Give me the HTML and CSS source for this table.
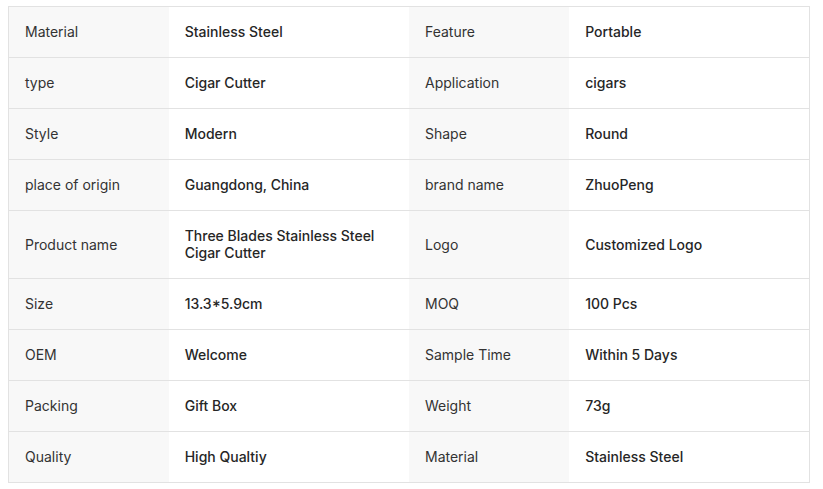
FILE: index.html
```html
<!DOCTYPE html>
<html lang="en">
<head>
<meta charset="utf-8">
<title>Specifications</title>
<link rel="stylesheet" href="styles.css">
</head>
<body>
<table class="spec">
  <colgroup>
    <col class="c-label"><col class="c-value"><col class="c-label"><col class="c-value">
  </colgroup>
  <tbody>
    <tr><td class="label">Material</td><td class="value">Stainless Steel</td><td class="label">Feature</td><td class="value">Portable</td></tr>
    <tr><td class="label">type</td><td class="value">Cigar Cutter</td><td class="label">Application</td><td class="value">cigars</td></tr>
    <tr><td class="label">Style</td><td class="value">Modern</td><td class="label">Shape</td><td class="value">Round</td></tr>
    <tr><td class="label">place of origin</td><td class="value">Guangdong, China</td><td class="label">brand name</td><td class="value">ZhuoPeng</td></tr>
    <tr><td class="label">Product name</td><td class="value">Three Blades Stainless Steel Cigar Cutter</td><td class="label">Logo</td><td class="value">Customized Logo</td></tr>
    <tr><td class="label">Size</td><td class="value">13.3*5.9cm</td><td class="label">MOQ</td><td class="value">100 Pcs</td></tr>
    <tr><td class="label">OEM</td><td class="value">Welcome</td><td class="label">Sample Time</td><td class="value">Within 5 Days</td></tr>
    <tr><td class="label">Packing</td><td class="value">Gift Box</td><td class="label">Weight</td><td class="value">73g</td></tr>
    <tr><td class="label">Quality</td><td class="value">High Qualtiy</td><td class="label">Material</td><td class="value">Stainless Steel</td></tr>
  </tbody>
</table>
</body>
</html>
```
FILE: styles.css
```css
html, body {
  background: #ffffff;
}
body {
  margin: 6px 8px;
  font-family: Inter, "Noto Sans", sans-serif;
  font-size: 14px;
  line-height: 17px;
}
.spec {
  width: 802px;
  border-collapse: collapse;
  table-layout: fixed;
  border: 1px solid #e2e2e2;
}
.c-label { width: 20%; }
.c-value { width: 30%; }
.spec tr {
  border-top: 1px solid #e2e2e2;
}
.spec td {
  padding: 16px 16px 17px;
  vertical-align: middle;
  text-align: left;
}
.label {
  background: #f8f8f8;
  color: #333333;
  font-weight: 400;
}
.value {
  background: #ffffff;
  color: #262626;
  font-weight: 500;
}
```
